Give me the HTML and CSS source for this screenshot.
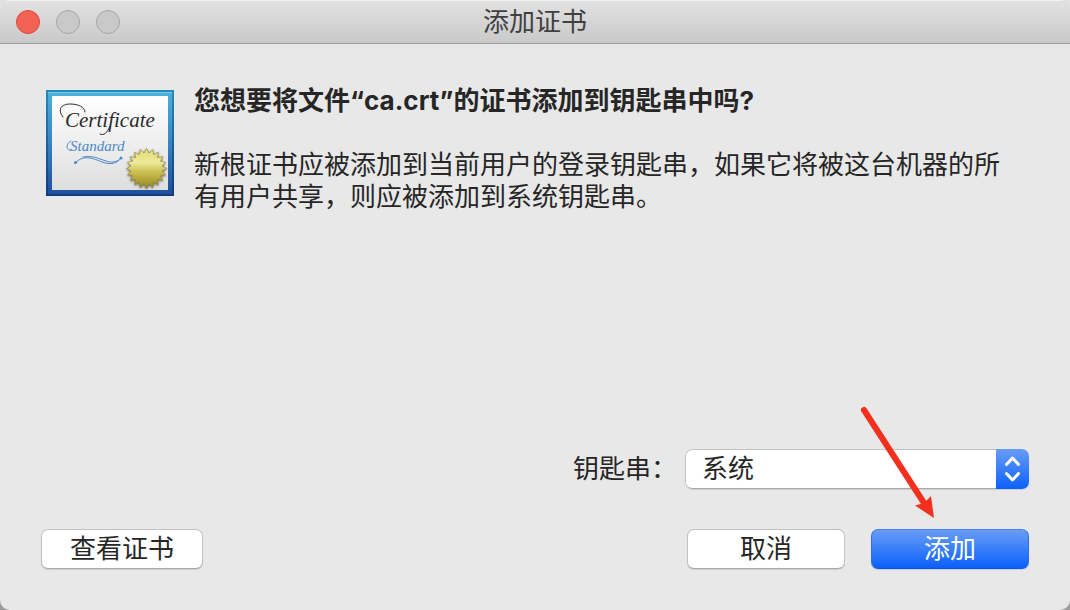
FILE: index.html
```html
<!DOCTYPE html>
<html lang="zh-CN">
<head>
<meta charset="utf-8">
<title>添加证书</title>
<link rel="stylesheet" href="styles.css">
</head>
<body>
<div class="window">
  <header class="titlebar">
    <div class="lights">
      <button class="light light-close" type="button" aria-label="关闭"></button>
      <button class="light" type="button" aria-label="最小化" disabled></button>
      <button class="light" type="button" aria-label="缩放" disabled></button>
    </div>
    <h1 class="title">添加证书</h1>
  </header>
  <main class="content">
    <section class="message">
      <svg class="certificate" viewBox="0 0 128 106" role="img" aria-label="Certificate Standard">
        <defs>
          <linearGradient id="frame" x1="0" y1="0" x2="0" y2="1">
            <stop offset="0" stop-color="#4db0da"/><stop offset=".5" stop-color="#3685c2"/><stop offset="1" stop-color="#1f4f9c"/>
          </linearGradient>
          <linearGradient id="edge" x1="0" y1="0" x2="0" y2="1">
            <stop offset="0" stop-color="#268abb"/><stop offset="1" stop-color="#123b80"/>
          </linearGradient>
          <linearGradient id="paper" x1="0" y1="0" x2="0" y2="1">
            <stop offset="0" stop-color="#fff"/><stop offset="1" stop-color="#dedede"/>
          </linearGradient>
          <linearGradient id="gold" x1="0" y1="0" x2="0" y2="1">
            <stop offset="0" stop-color="#dfd974"/><stop offset=".35" stop-color="#eee99a"/><stop offset=".6" stop-color="#c9bd50"/><stop offset="1" stop-color="#97851e"/>
          </linearGradient>
        </defs>
        <rect width="128" height="106" fill="url(#edge)"/>
        <rect x="2" y="2" width="124" height="102" fill="url(#frame)"/>
        <path d="M2 2.5h124" stroke="#79cbe8"/>
        <rect x="6" y="6" width="116" height="94" fill="url(#paper)"/>
        <path d="M17 27C11 20 15 14 24 14C32 14 39 17 39 22" fill="none" stroke="#2b2b2b" stroke-linecap="round"/>
        <path d="M64 36C61 43 58 46 54 44" fill="none" stroke="#2b2b2b" stroke-linecap="round"/>
        <text class="script script-main" x="19" y="37">Certificate</text>
        <text class="script script-sub" x="24" y="61">Standard</text>
        <path d="M26 60C20 62 19 54 25 51" fill="none" stroke="#4c88ca" stroke-linecap="round"/>
        <g fill="none" stroke="#4c88ca" stroke-linecap="round">
          <path d="M30 72C39 64 48 69 56 72C64 75 71 74 75 68" stroke-width="1"/>
          <path d="M37 67C47 65 53 69 60 71C65 73 69 72 73 70" stroke-width="1"/>
        </g>
        <circle cx="29.500" cy="72.500" r="1.500" fill="#4c88ca"/><circle cx="75" cy="68" r="1.500" fill="#4c88ca"/>
        <path class="seal" transform="translate(100.500 78.500)" fill="url(#gold)" stroke="#8b8030" stroke-width=".6" d="M0-20L2.500-15.500 6.200-19 7.300-14 11.800-16.200 11-11 16.200-11.800 14-7.300 19-6.200 15.500-2.500 20 0 15.500 2.500 19 6.200 14 7.300 16.200 11.800 11 11 11.800 16.200 7.300 14 6.200 19 2.500 15.500 0 20-2.500 15.500-6.200 19-7.300 14-11.800 16.200-11 11-16.200 11.800-14 7.300-19 6.200-15.500 2.500-20 0-15.500-2.500-19-6.200-14-7.300-16.200-11.800-11-11-11.800-16.200-7.300-14-6.200-19-2.500-15.500Z"/>
      </svg>
      <div class="copy">
        <h2 class="question">您想要将文件“ca.crt”的证书添加到钥匙串中吗?</h2>
        <p class="detail">新根证书应被添加到当前用户的登录钥匙串，如果它将被这台机器的所有用户共享，则应被添加到系统钥匙串。</p>
      </div>
    </section>
    <form class="form">
      <div class="field">
        <label class="label" for="keychain">钥匙串：</label>
        <div class="picker">
          <select class="select" id="keychain"><option>系统</option></select>
          <svg class="stepper" viewBox="0 0 33 40" aria-hidden="true">
            <path d="M10.500 15.500l6-6.500 6 6.500M10.500 24.500l6 6.500 6-6.500" fill="none" stroke="#fff" stroke-width="3" stroke-linecap="round" stroke-linejoin="round"/>
          </svg>
        </div>
      </div>
      <div class="actions">
        <button class="button view" type="button">查看证书</button>
        <button class="button" type="button">取消</button>
        <div class="target">
          <button class="button primary" type="button">添加</button>
          <svg class="arrow" viewBox="0 0 80 112" aria-hidden="true">
            <path d="M4 5L64 98" stroke="#f3301d" stroke-width="6" stroke-linecap="round"/>
            <path d="M74 113L55 100.500L64 98L71 91Z" fill="#f3301d"/>
          </svg>
        </div>
      </div>
    </form>
  </main>
</div>
</body>
</html>
```
FILE: styles.css
```css
* { box-sizing: border-box; }

body {
  margin: 0;
  background: linear-gradient(#e2e2e2, #9c9c9c);
  color: #262626;
  font: 26px/32px Inter, "Noto Sans CJK SC", sans-serif;
}

.window {
  display: flex;
  flex-direction: column;
  min-height: 100vh;
  border-radius: 10px;
  overflow: hidden;
  background: #e8e8e8;
}

.titlebar {
  display: grid;
  grid-template-columns: 1fr auto 1fr;
  align-items: center;
  height: 44px;
  padding: 0 16px;
  background: linear-gradient(#e2e2e2, #c9c9c9);
  border-bottom: 1px solid #9c9c9c;
  box-shadow: inset 0 1px #f3f3f3;
}

.lights { display: flex; gap: 16px; }

.light {
  width: 24px;
  height: 24px;
  padding: 0;
  border: 1px solid #a5a5a5;
  border-radius: 50%;
  background: #c9c9c9;
}

.light-close { border-color: #e0473d; background: #f26356; }

.title {
  margin: 0;
  color: #404040;
  font-size: 26px;
  font-weight: 400;
}

.content {
  display: flex;
  flex: 1;
  flex-direction: column;
  padding: 41px;
}

.message {
  display: flex;
  align-items: flex-start;
  gap: 20px;
  padding: 0 9px 0 5px;
}

.certificate {
  flex: none;
  width: 128px;
  height: 106px;
  margin-top: 5px;
}

.script { font-family: "Liberation Serif", serif; font-style: italic; }
.script-main { fill: #2b2b2b; font-size: 21px; }
.script-sub { fill: #4c88ca; font-size: 15px; }
.seal { filter: drop-shadow(0 1px 1px #777); }

.copy { flex: 1; }

.question {
  margin: 0 0 32px;
  font-size: 26px;
  font-weight: 700;
}

.detail { margin: 0; }

.form {
  display: flex;
  flex-direction: column;
  gap: 40px;
  margin-top: auto;
}

.field {
  display: flex;
  align-items: center;
  justify-content: flex-end;
  gap: 8px;
}

.picker {
  display: flex;
  width: 344px;
  height: 40px;
  border-radius: 7px;
  overflow: hidden;
  background: #fff;
  box-shadow: 0 1px 1px #cecece;
}

.select {
  flex: 1;
  padding: 0 16px;
  border: 1px solid #c2c2c2;
  border-right: 0;
  border-bottom-color: #a8a8a8;
  border-radius: 7px 0 0 7px;
  appearance: none;
  background: #fff;
  color: inherit;
  font: inherit;
}

.stepper {
  width: 33px;
  height: 40px;
  background: linear-gradient(#689df6, #0b60fb);
  pointer-events: none;
}

.actions { display: flex; align-items: center; gap: 26px; }

.button {
  width: 158px;
  height: 40px;
  padding: 0;
  border: 1px solid #c2c2c2;
  border-bottom-color: #a8a8a8;
  border-radius: 7px;
  background: #fff;
  box-shadow: 0 1px 1px #cecece;
  color: inherit;
  font: inherit;
}

.view { width: 162px; margin-right: auto; }

.primary {
  display: block;
  border-color: #4583ec #2e71ef #0b58e8;
  background: linear-gradient(#689df6, #0b60fb);
  color: #fff;
}

.target { position: relative; }

.arrow {
  position: absolute;
  top: -124px;
  left: -11px;
  width: 80px;
  height: 112px;
  overflow: visible;
  pointer-events: none;
}
```
